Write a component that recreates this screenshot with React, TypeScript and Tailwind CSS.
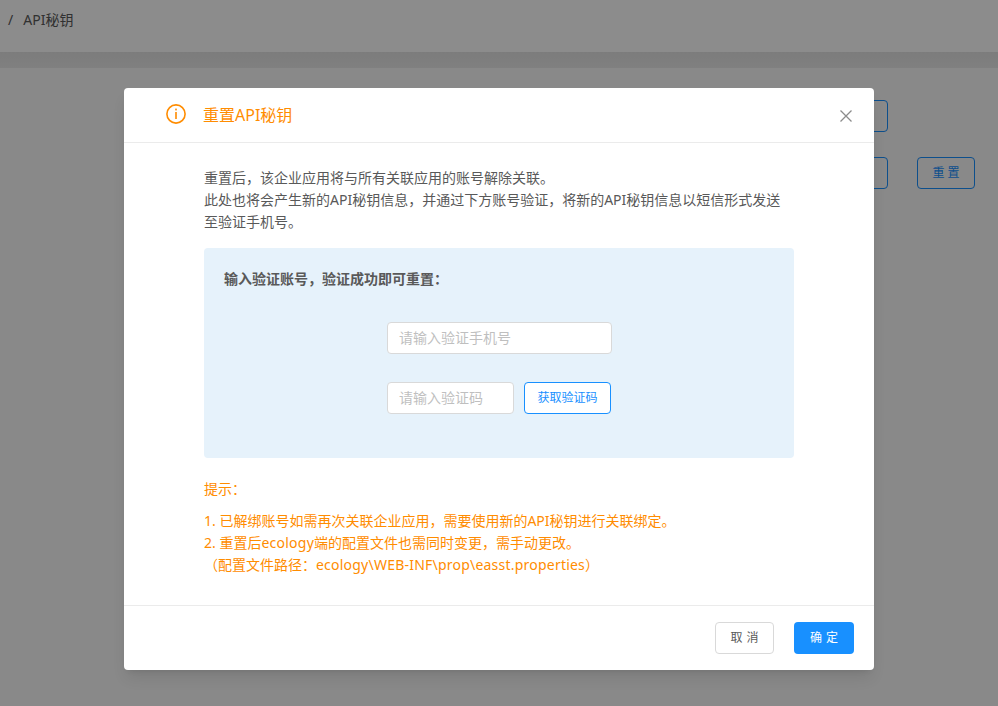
const FONT = 'font-["Noto_Sans","Noto_Sans_CJK_SC",sans-serif]'

function BackgroundPage() {
  return (
    <div className="h-[706px] bg-[#f9f9f9]">
      {/* Breadcrumb bar */}
      <div className="h-[52px] bg-white pl-[8px] pt-[11px] text-sm leading-[18px] text-[#595959]">
        <span className="mr-[10px]">/</span>
        <span>API秘钥</span>
      </div>
      <div className="h-[16px] bg-gradient-to-b from-[#e2e2e2] to-[#e9e9e9]" />

      {/* Key rows, mostly hidden by the dialog */}
      <div className="flex flex-col gap-[25px] pt-[32px] pl-[600px]">
        <div className="h-[32px] w-[288px] rounded-[4px] border border-[#1890ff]" />
        <div className="flex gap-[29px]">
          <div className="h-[32px] w-[288px] rounded-[4px] border border-[#1890ff]" />
          <button className="h-[32px] w-[58px] rounded-[4px] border border-[#1890ff] pl-[3px] text-xs tracking-[3px] text-[#1890ff]">
            重置
          </button>
        </div>
      </div>
    </div>
  )
}

export default function App() {
  return (
    <div className={`relative h-[706px] w-[998px] overflow-hidden ${FONT}`}>
      <BackgroundPage />

      {/* Overlay */}
      <div className="absolute inset-0 flex items-start justify-center bg-black/45 pt-[88px]">
        <div className="h-[582px] w-[750px] rounded-[4px] bg-white flex flex-col shadow-lg">
          {/* Header */}
          <div className="flex h-[55px] items-center border-b border-[#ebebeb] pl-[42px] pr-[22px]">
            <svg width="20" height="20" viewBox="0 0 20 20" fill="none" className="-mt-[2px] text-[#ff8c00]">
              <circle cx="10" cy="10" r="9.1" stroke="currentColor" strokeWidth="1.6" />
              <rect x="9.2" y="4.6" width="1.6" height="1.8" fill="currentColor" />
              <rect x="9.2" y="8" width="1.6" height="7" fill="currentColor" />
            </svg>
            <span className="ml-[17px] text-base text-[#ff8c00]">重置API秘钥</span>
            <svg width="12" height="12" viewBox="0 0 12 12" fill="none" className="ml-auto mt-[2px] text-[#8c8c8c]">
              <path d="M0.5 0.5 11.5 11.5M11.5 0.5 0.5 11.5" stroke="currentColor" strokeWidth="1.3" />
            </svg>
          </div>

          {/* Body */}
          <div className="flex-1 px-[80px] pt-[24px]">
            <p className="text-sm leading-[22px] text-[#595959]">
              重置后，该企业应用将与所有关联应用的账号解除关联。
              <br />
              此处也将会产生新的API秘钥信息，并通过下方账号验证，将新的API秘钥信息以短信形式发送
              <br />
              至验证手机号。
            </p>

            <div className="mt-[15px] h-[210px] rounded-[4px] bg-[#e6f2fb] px-[20px] pt-[20px]">
              <p className="text-sm font-bold leading-[22px] text-[#595959]">
                输入验证账号，验证成功即可重置：
              </p>
              <div className="mt-[32px] flex flex-col gap-[28px] pl-[163px]">
                <input
                  placeholder="请输入验证手机号"
                  className="h-[32px] w-[225px] rounded-[4px] border border-[#d9d9d9] bg-white pl-[11px] pr-[11px] pb-[2px] text-sm outline-none placeholder:text-[#bfbfbf]"
                />
                <div className="flex gap-[10px]">
                  <input
                    placeholder="请输入验证码"
                    className="h-[32px] w-[127px] rounded-[4px] border border-[#d9d9d9] bg-white pl-[11px] pr-[11px] pb-[2px] text-sm outline-none placeholder:text-[#bfbfbf]"
                  />
                  <button className="h-[32px] w-[87px] rounded-[4px] border border-[#1890ff] bg-white text-xs text-[#1890ff]">
                    获取验证码
                  </button>
                </div>
              </div>
            </div>

            <p className="mt-[20px] text-sm leading-[22px] text-[#ff8c00]">提示：</p>
            <p className="mt-[10px] text-sm leading-[22px] text-[#ff8c00]">
              1. 已解绑账号如需再次关联企业应用，需要使用新的API秘钥进行关联绑定。
              <br />
              2. 重置后<span className="tracking-[0.25px]">ecology</span>端的配置文件也需同时变更，需手动更改。
              <br />
              （配置文件路径：<span className="tracking-[0.22px]">ecology\WEB-INF\prop\easst.properties</span>）
            </p>
          </div>

          {/* Footer */}
          <div className="flex h-[65px] items-start justify-end gap-[20px] border-t border-[#ebebeb] pr-[20px] pt-[16px]">
            <button className="h-[32px] w-[59px] rounded-[4px] border border-[#d9d9d9] bg-white pl-[4px] text-xs tracking-[4px] text-[#595959]">
              取消
            </button>
            <button className="h-[32px] w-[60px] rounded-[4px] bg-[#1890ff] pl-[4px] text-xs tracking-[4px] text-white">
              确定
            </button>
          </div>
        </div>
      </div>
    </div>
  )
}
